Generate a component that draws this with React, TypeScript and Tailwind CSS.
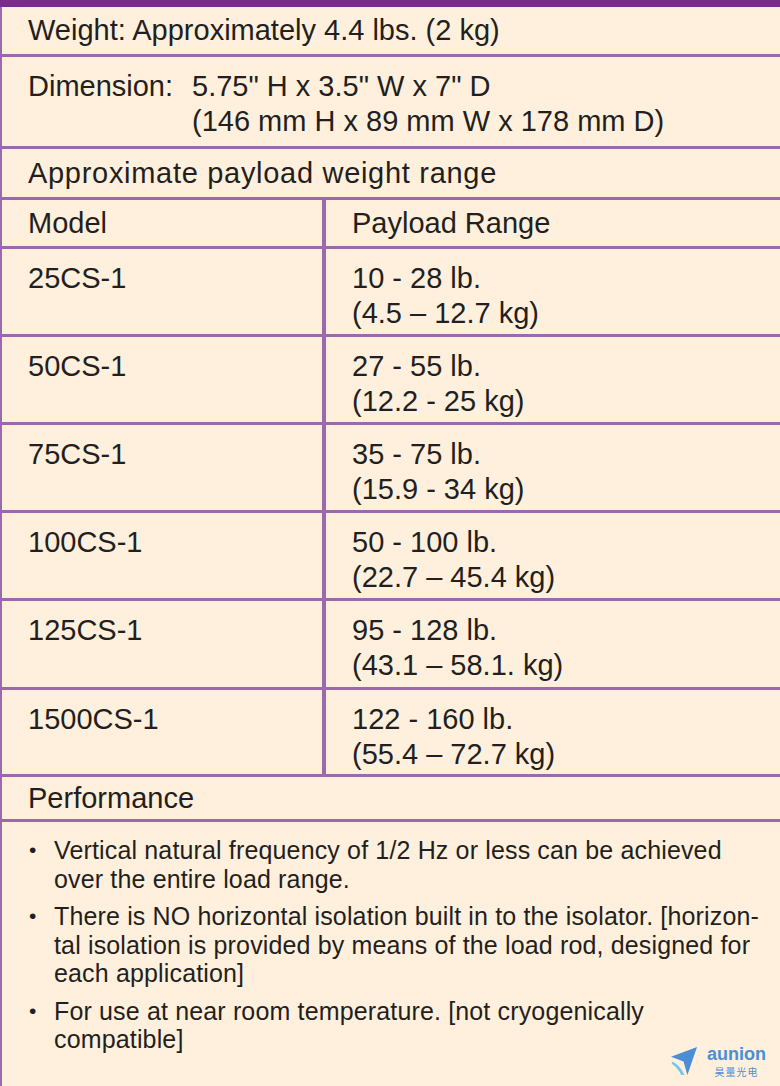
import React from 'react';

const rows = [
  { model: '25CS-1', lb: '10 - 28 lb.', kg: '(4.5 – 12.7 kg)', h: 'h-[88px]' },
  { model: '50CS-1', lb: '27 - 55 lb.', kg: '(12.2 - 25 kg)', h: 'h-[88px]' },
  { model: '75CS-1', lb: '35 - 75 lb.', kg: '(15.9 - 34 kg)', h: 'h-[88px]' },
  { model: '100CS-1', lb: '50 - 100 lb.', kg: '(22.7 – 45.4 kg)', h: 'h-[88px]' },
  { model: '125CS-1', lb: '95 - 128 lb.', kg: '(43.1 – 58.1. kg)', h: 'h-[89px]' },
  { model: '1500CS-1', lb: '122 - 160 lb.', kg: '(55.4 – 72.7 kg)', h: 'h-[87px]' },
];

// watermark logo, bottom right
function Logo() {
  return (
    <div className="absolute right-[14px] bottom-[9px] flex items-center gap-[9px]">
      <svg width="27" height="29" viewBox="0 0 28 30">
        <path d="M0 10 L27 0 L17 29 L13 15 Z" fill="#4a8fd6" />
        <path d="M1 15 Q9 18 14 29 L10.5 29 Q7 21 1 17.5 Z" fill="#74c6ec" />
      </svg>
      <div className="flex flex-col items-center gap-[3px]">
        <span className="text-[18px] leading-[18px] font-bold text-[#4a8fd6]">aunion</span>
        <span className="text-[10px] leading-[11px] text-[#4a8fd6] tracking-[1px] font-['Noto_Sans_CJK_SC',sans-serif]">昊量光电</span>
      </div>
    </div>
  );
}

export default function App() {
  return (
    <div className="relative w-[780px] h-[1086px] bg-[#fef0dc] text-[#231f20] font-['Liberation_Sans',Arial,sans-serif] overflow-hidden flex flex-col">
      <div className="h-[7px] bg-[#7d2a8e] shrink-0" />
      <div className="flex-1 flex flex-col border-l-2 border-[#9c69ad]">
        <div className="h-[50px] border-b-[3px] border-[#9c69ad] pl-[26px] flex items-center text-[29px] leading-[35px]">
          Weight: Approximately 4.4 lbs. (2 kg)
        </div>
        <div className="h-[92px] border-b-[3px] border-[#9c69ad] pl-[26px] pt-[12px] flex text-[29px] leading-[35px]">
          <span className="w-[164px]">Dimension:</span>
          <div className="flex flex-col">
            <span>5.75" H x 3.5" W x 7" D</span>
            <span>(146 mm H x 89 mm W x 178 mm D)</span>
          </div>
        </div>
        <div className="h-[51px] border-b-[3px] border-[#9c69ad] pl-[26px] flex items-center text-[29px] leading-[35px] tracking-[0.7px]">
          Approximate payload weight range
        </div>
        <div className="h-[49px] border-b-[3px] border-[#9c69ad] flex text-[29px] leading-[35px]">
          <div className="w-[324px] border-r-[4px] border-[#9c69ad] pl-[26px] flex items-center">Model</div>
          <div className="flex-1 pl-[26px] flex items-center">Payload Range</div>
        </div>
        {rows.map((r) => (
          <div key={r.model} className={`${r.h} border-b-[3px] border-[#9c69ad] flex text-[29px] leading-[35px]`}>
            <div className="w-[324px] border-r-[4px] border-[#9c69ad] pl-[26px] pt-[12px]">{r.model}</div>
            <div className="flex-1 pl-[26px] pt-[12px] flex flex-col">
              <span>{r.lb}</span>
              <span>{r.kg}</span>
            </div>
          </div>
        ))}
        <div className="h-[45px] border-b-[3px] border-[#9c69ad] pl-[26px] flex items-center text-[29px] leading-[35px]">
          Performance
        </div>
        <div className="flex-1 pt-[14px] text-[25px] leading-[28.5px] tracking-[0.15px]">
          <ul className="flex flex-col gap-[9px]">
            <li className="flex">
              <span className="w-[52px] pl-[27px] text-[21px]">•</span>
              <span>
                Vertical natural frequency of 1/2 Hz or less can be achieved
                <br />
                over the entire load range.
              </span>
            </li>
            <li className="flex">
              <span className="w-[52px] pl-[27px] text-[21px]">•</span>
              <span>
                There is NO horizontal isolation built in to the isolator. [horizon-
                <br />
                tal isolation is provided by means of the load rod, designed for
                <br />
                each application]
              </span>
            </li>
            <li className="flex">
              <span className="w-[52px] pl-[27px] text-[21px]">•</span>
              <span>
                For use at near room temperature. [not cryogenically
                <br />
                compatible]
              </span>
            </li>
          </ul>
        </div>
      </div>
      <Logo />
    </div>
  );
}
